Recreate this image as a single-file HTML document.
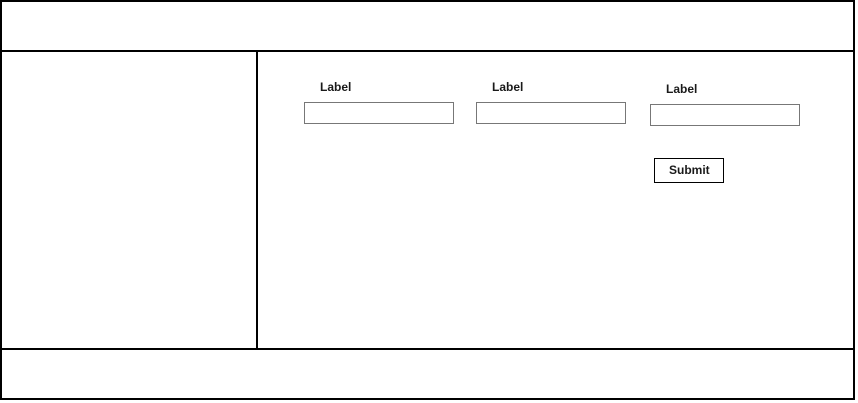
<!DOCTYPE html>
<html><head><style>
html,body{margin:0;padding:0;background:#fff;width:858px;height:403px;overflow:hidden}
svg{display:block}
text{font-family:"Liberation Sans",sans-serif;font-weight:bold;font-size:12px;fill:#1a1a1a}
</style></head><body>
<svg width="858" height="403" viewBox="0 0 858 403">
<rect x="1" y="1" width="853" height="398" fill="none" stroke="#000" stroke-width="2"/>
<line x1="0" y1="51" x2="855" y2="51" stroke="#000" stroke-width="2"/>
<line x1="0" y1="349" x2="855" y2="349" stroke="#000" stroke-width="2"/>
<line x1="257" y1="51" x2="257" y2="349" stroke="#000" stroke-width="2"/>
<text x="320" y="91">Label</text>
<text x="492" y="91">Label</text>
<text x="666" y="93">Label</text>
<rect x="304.5" y="102.5" width="149" height="21" fill="#fff" stroke="#777" stroke-width="1"/>
<rect x="476.5" y="102.5" width="149" height="21" fill="#fff" stroke="#777" stroke-width="1"/>
<rect x="650.5" y="104.5" width="149" height="21" fill="#fff" stroke="#777" stroke-width="1"/>
<rect x="654.5" y="158.5" width="69" height="24" fill="#fff" stroke="#000" stroke-width="1"/>
<text x="669" y="174">Submit</text>
</svg>
</body></html>
